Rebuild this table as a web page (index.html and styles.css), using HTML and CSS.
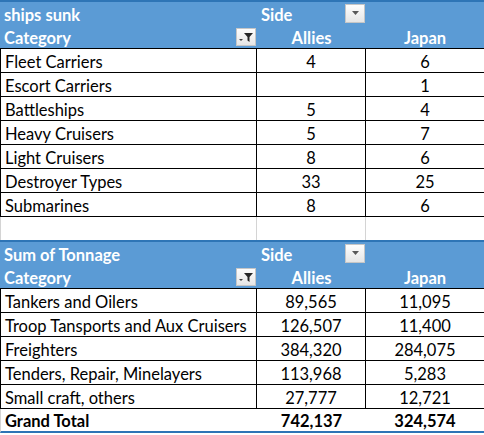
FILE: index.html
```html
<!DOCTYPE html>
<html lang="en">
<head>
    <meta charset="UTF-8">
    <title>Ships sunk pivot</title>
    <link rel="stylesheet" href="styles.css">
</head>
<body>
    <table class="pivot first">
        <colgroup>
            <col class="c-cat">
            <col class="c-num">
            <col class="c-num2">
        </colgroup>
        <thead>
            <tr class="title">
                <th>ships sunk</th>
                <th class="side">Side <span class="btn drop"><svg width="9" height="5" viewBox="0 0 9 5"><path d="M1 0h7L4.5 4z" fill="#595959"/></svg></span></th>
                <th></th>
            </tr>
            <tr class="cols">
                <th class="cat">Category <span class="btn filter"><svg width="16" height="13" viewBox="0 0 16 13"><path d="M6 2h9l-3.5 4v5l-2-1.5V6z" fill="#262626"/><path d="M1 8h4L3 10z" fill="#404040"/></svg></span></th>
                <th class="num">Allies</th>
                <th class="num">Japan</th>
            </tr>
        </thead>
        <tbody>
            <tr><td>Fleet Carriers</td><td class="num">4</td><td class="num">6</td></tr>
            <tr><td>Escort Carriers</td><td class="num"></td><td class="num">1</td></tr>
            <tr><td>Battleships</td><td class="num">5</td><td class="num">4</td></tr>
            <tr><td>Heavy Cruisers</td><td class="num">5</td><td class="num">7</td></tr>
            <tr><td>Light Cruisers</td><td class="num">8</td><td class="num">6</td></tr>
            <tr><td>Destroyer Types</td><td class="num">33</td><td class="num">25</td></tr>
            <tr><td>Submarines</td><td class="num">8</td><td class="num">6</td></tr>
            <tr class="blank"><td></td><td></td><td></td></tr>
        </tbody>
    </table>

    <table class="pivot second">
        <colgroup>
            <col class="c-cat">
            <col class="c-num">
            <col class="c-num2">
        </colgroup>
        <thead>
            <tr class="title">
                <th>Sum of Tonnage</th>
                <th class="side">Side <span class="btn drop"><svg width="9" height="5" viewBox="0 0 9 5"><path d="M1 0h7L4.5 4z" fill="#595959"/></svg></span></th>
                <th></th>
            </tr>
            <tr class="cols">
                <th class="cat">Category <span class="btn filter"><svg width="16" height="13" viewBox="0 0 16 13"><path d="M6 2h9l-3.5 4v5l-2-1.5V6z" fill="#262626"/><path d="M1 8h4L3 10z" fill="#404040"/></svg></span></th>
                <th class="num">Allies</th>
                <th class="num">Japan</th>
            </tr>
        </thead>
        <tbody>
            <tr><td>Tankers and Oilers</td><td class="num">89,565</td><td class="num">11,095</td></tr>
            <tr><td>Troop Tansports and Aux Cruisers</td><td class="num">126,507</td><td class="num">11,400</td></tr>
            <tr><td>Freighters</td><td class="num">384,320</td><td class="num">284,075</td></tr>
            <tr><td>Tenders, Repair, Minelayers</td><td class="num">113,968</td><td class="num">5,283</td></tr>
            <tr><td>Small craft, others</td><td class="num">27,777</td><td class="num">12,721</td></tr>
        </tbody>
        <tfoot>
            <tr class="total"><td>Grand Total</td><td class="num">742,137</td><td class="num">324,574</td></tr>
        </tfoot>
    </table>
</body>
</html>
```

FILE: styles.css
```css
:root {
    --head-blue: #5b9bd5;
    --edge-blue: #2e75b6;
    --grid: #000;
    --pale-grid: #d4d4d4;
}

* {
    box-sizing: border-box;
    margin: 0;
    padding: 0;
}

body {
    background: #fff;
    font-family: Lato, 'Open Sans', sans-serif;
    font-size: 16.5px;
    line-height: 20px;
    color: #000;
    width: 484px;
}

.pivot {
    width: 484px;
    table-layout: fixed;
    border-collapse: separate;
    border-spacing: 0;
}

.c-cat { width: 257px; }
.c-num { width: 109px; }
.c-num2 { width: 118px; }

.pivot th,
.pivot td {
    padding: 2px 4px 0;
    white-space: nowrap;
    vertical-align: middle;
}

.pivot thead tr {
    background: var(--head-blue);
    color: #fff;
}

.pivot th {
    text-align: left;
    font-weight: bold;
    padding-top: 3px;
}

.pivot .title th {
    height: 25px;
    border-top: 2px solid var(--edge-blue);
}

.second .title th {
    height: 24px;
}

.pivot .cols th {
    height: 24px;
    border-bottom: 1px solid var(--grid);
}

.pivot th.num,
.pivot td.num {
    text-align: center;
}

.side,
.cat {
    position: relative;
}

.btn {
    position: absolute;
    right: 1px;
    top: 2px;
    width: 20px;
    height: 19px;
    background: linear-gradient(#fdfdfd, #e6e6e6);
    border: 1px solid #c6c6c6;
    display: flex;
    align-items: center;
    justify-content: center;
}

.filter {
    right: 1px;
    top: 3px;
    height: 18px;
}

.pivot tbody td {
    height: 24px;
    border-bottom: 1px solid var(--grid);
    border-right: 1px solid var(--grid);
}

.pivot tbody td:first-child {
    border-left: 1px solid var(--grid);
}

.pivot tbody td:last-child {
    border-right: none;
}

.pivot tbody tr.blank td {
    height: 23px;
    border-bottom: none;
    border-right-color: var(--pale-grid);
}

.pivot tbody tr.blank td:first-child {
    border-left-color: var(--pale-grid);
}

.total td {
    height: 24px;
    font-weight: bold;
    border-bottom: 2px solid var(--edge-blue);
}

.total td:first-child {
    border-left: 1px solid var(--pale-grid);
}
```
